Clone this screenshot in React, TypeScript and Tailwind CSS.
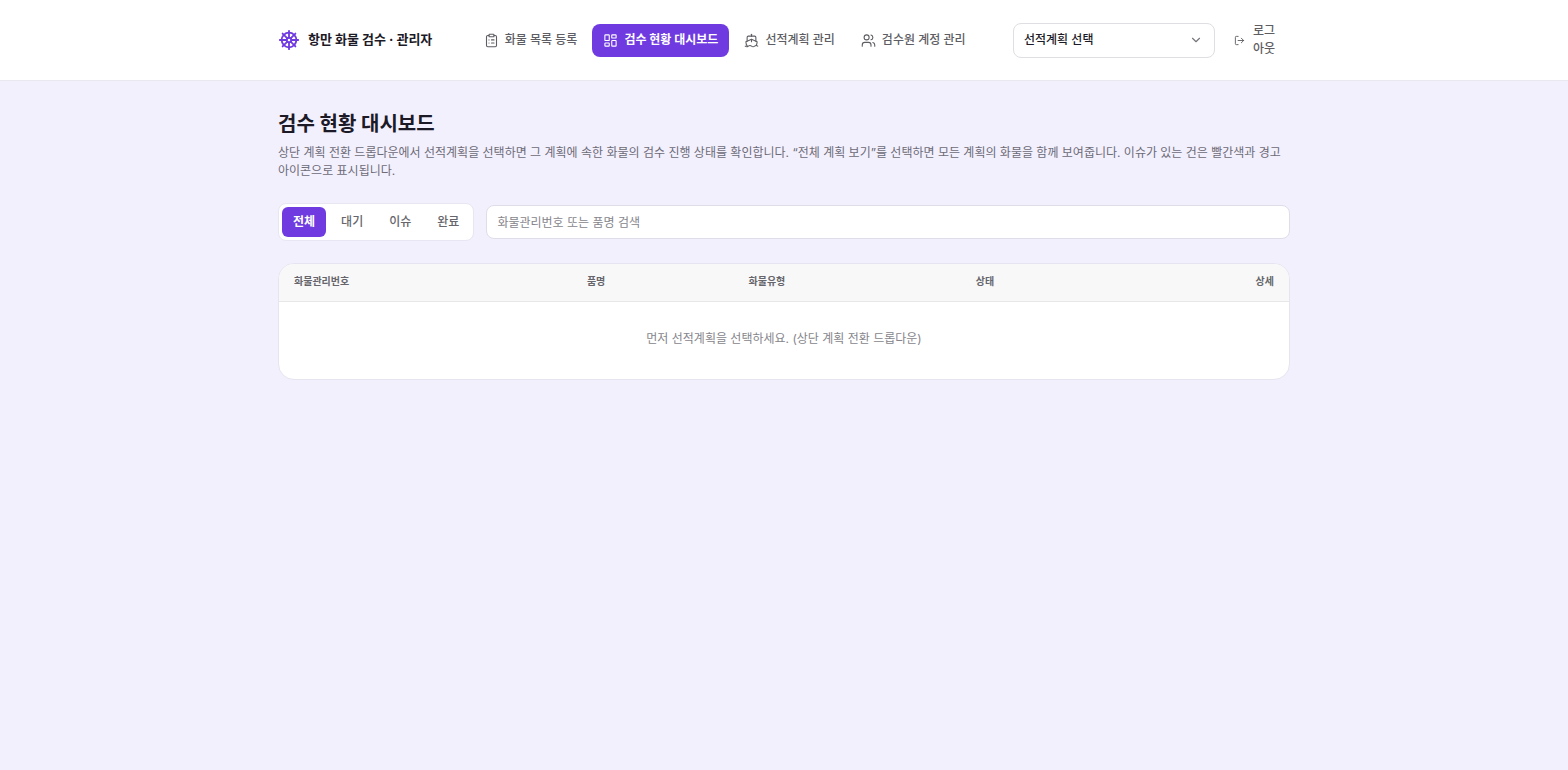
import { useState } from "react";
import {
  ChevronDown,
  ClipboardList,
  LayoutDashboard,
  LogOut,
  Ship,
  ShipWheel,
  Users,
} from "lucide-react";

const NAV = [
  { label: "화물 목록 등록", Icon: ClipboardList },
  { label: "검수 현황 대시보드", Icon: LayoutDashboard, active: true },
  { label: "선적계획 관리", Icon: Ship },
  { label: "검수원 계정 관리", Icon: Users },
];

const FILTERS = ["전체", "대기", "이슈", "완료"];

function Header() {
  return (
    <header className="border-b border-[#e9e8f1] bg-white">
      <div className="mx-auto flex min-h-20 max-w-[1012px] items-center justify-between">
        <a href="#" className="mr-1 flex items-center gap-2 whitespace-nowrap text-[13px] font-bold text-[#1c1a27]">
          <ShipWheel size={22} className="text-[#6f3be0]" />
          항만 화물 검수 · 관리자
        </a>
        <nav className="flex items-center gap-1">
          {NAV.map(({ label, Icon, active }) => (
            <a
              key={label}
              href="#"
              aria-current={active ? "page" : undefined}
              className={
                active
                  ? "flex h-[33px] items-center gap-1.5 whitespace-nowrap rounded-lg bg-[#6f3be0] px-[11px] font-bold text-white"
                  : "flex h-[33px] items-center gap-1.5 whitespace-nowrap rounded-lg px-[11px] font-medium text-[#5d5d63]"
              }
            >
              <Icon size={15} strokeWidth={1.75} />
              {label}
            </a>
          ))}
        </nav>
        <div className="flex items-center gap-2">
          <div className="relative">
            <select
              aria-label="선적계획 선택"
              className="h-[35px] w-[202px] appearance-none rounded-lg border border-[#dedee3] bg-white pl-2.5 pr-8 font-medium text-[#1c1a27]"
            >
              <option>선적계획 선택</option>
              <option>전체 계획 보기</option>
            </select>
            <ChevronDown
              size={14}
              className="pointer-events-none absolute right-3 top-1/2 -translate-y-1/2 text-[#77777d]"
            />
          </div>
          <button className="flex w-[67px] items-center gap-2 pl-[11px] pr-3 text-left font-medium leading-[18px] text-[#5d5d63]">
            <LogOut size={11} className="shrink-0" />
            <span>
              로그
              <wbr />
              아웃
            </span>
          </button>
        </div>
      </div>
    </header>
  );
}

export default function App() {
  const [filter, setFilter] = useState("전체");
  return (
    <div className="min-h-screen break-keep bg-[#f3f0fe] font-[Inter,'Noto_Sans_CJK_KR',sans-serif] text-xs">
      <Header />
      <main className="mx-auto max-w-[1012px] pt-[29px]">
        <h1 className="text-xl font-bold leading-7 text-[#1c1a27]">검수 현황 대시보드</h1>
        <p className="mt-1.5 leading-[18px] text-[#6c6b76]">
          상단 계획 전환 드롭다운에서 선적계획을 선택하면 그 계획에 속한 화물의 검수 진행 상태를 확인합니다. “전체 계획
          보기”를 선택하면 모든 계획의 화물을 함께 보여줍니다. 이슈가 있는 건은 빨간색과 경고 아이콘으로 표시됩니다.
        </p>
        <div className="mt-[23px] flex items-center gap-3">
          <div className="flex gap-1 rounded-lg border border-[#e8e6f1] bg-white p-[3px]">
            {FILTERS.map((name) => (
              <button
                key={name}
                aria-pressed={filter === name}
                onClick={() => setFilter(name)}
                className={
                  filter === name
                    ? "h-[30px] rounded-md bg-[#6f3be0] px-[11px] font-bold text-white"
                    : "h-[30px] rounded-md px-[11px] font-medium text-[#65656b]"
                }
              >
                {name}
              </button>
            ))}
          </div>
          <input
            type="search"
            aria-label="화물관리번호 또는 품명 검색"
            placeholder="화물관리번호 또는 품명 검색"
            className="h-[34px] min-w-0 flex-1 rounded-lg border border-[#dfdde8] bg-white px-2.5 text-[#1c1a27] placeholder:text-[#85858b]"
          />
        </div>
        <div className="mt-[22px] overflow-hidden rounded-2xl border border-[#e6e4ef] bg-white">
          <table className="w-full table-fixed">
            <thead>
              <tr className="h-[37px] border-b border-[#e8e8eb] bg-[#f8f8f8] text-left text-[10px] text-[#65656b]">
                <th className="w-[29%] px-[15px] pb-0.5 font-bold">화물관리번호</th>
                <th className="w-[16%] px-[15px] pb-0.5 font-bold">품명</th>
                <th className="w-[22.5%] px-[15px] pb-0.5 font-bold">화물유형</th>
                <th className="px-[15px] pb-0.5 font-bold">상태</th>
                <th className="px-[15px] pb-0.5 text-right font-bold">상세</th>
              </tr>
            </thead>
            <tbody>
              <tr>
                <td colSpan={5} className="h-[78px] pb-0.5 text-center text-[#85858b]">
                  먼저 선적계획을 선택하세요. (상단 계획 전환 드롭다운)
                </td>
              </tr>
            </tbody>
          </table>
        </div>
      </main>
    </div>
  );
}
